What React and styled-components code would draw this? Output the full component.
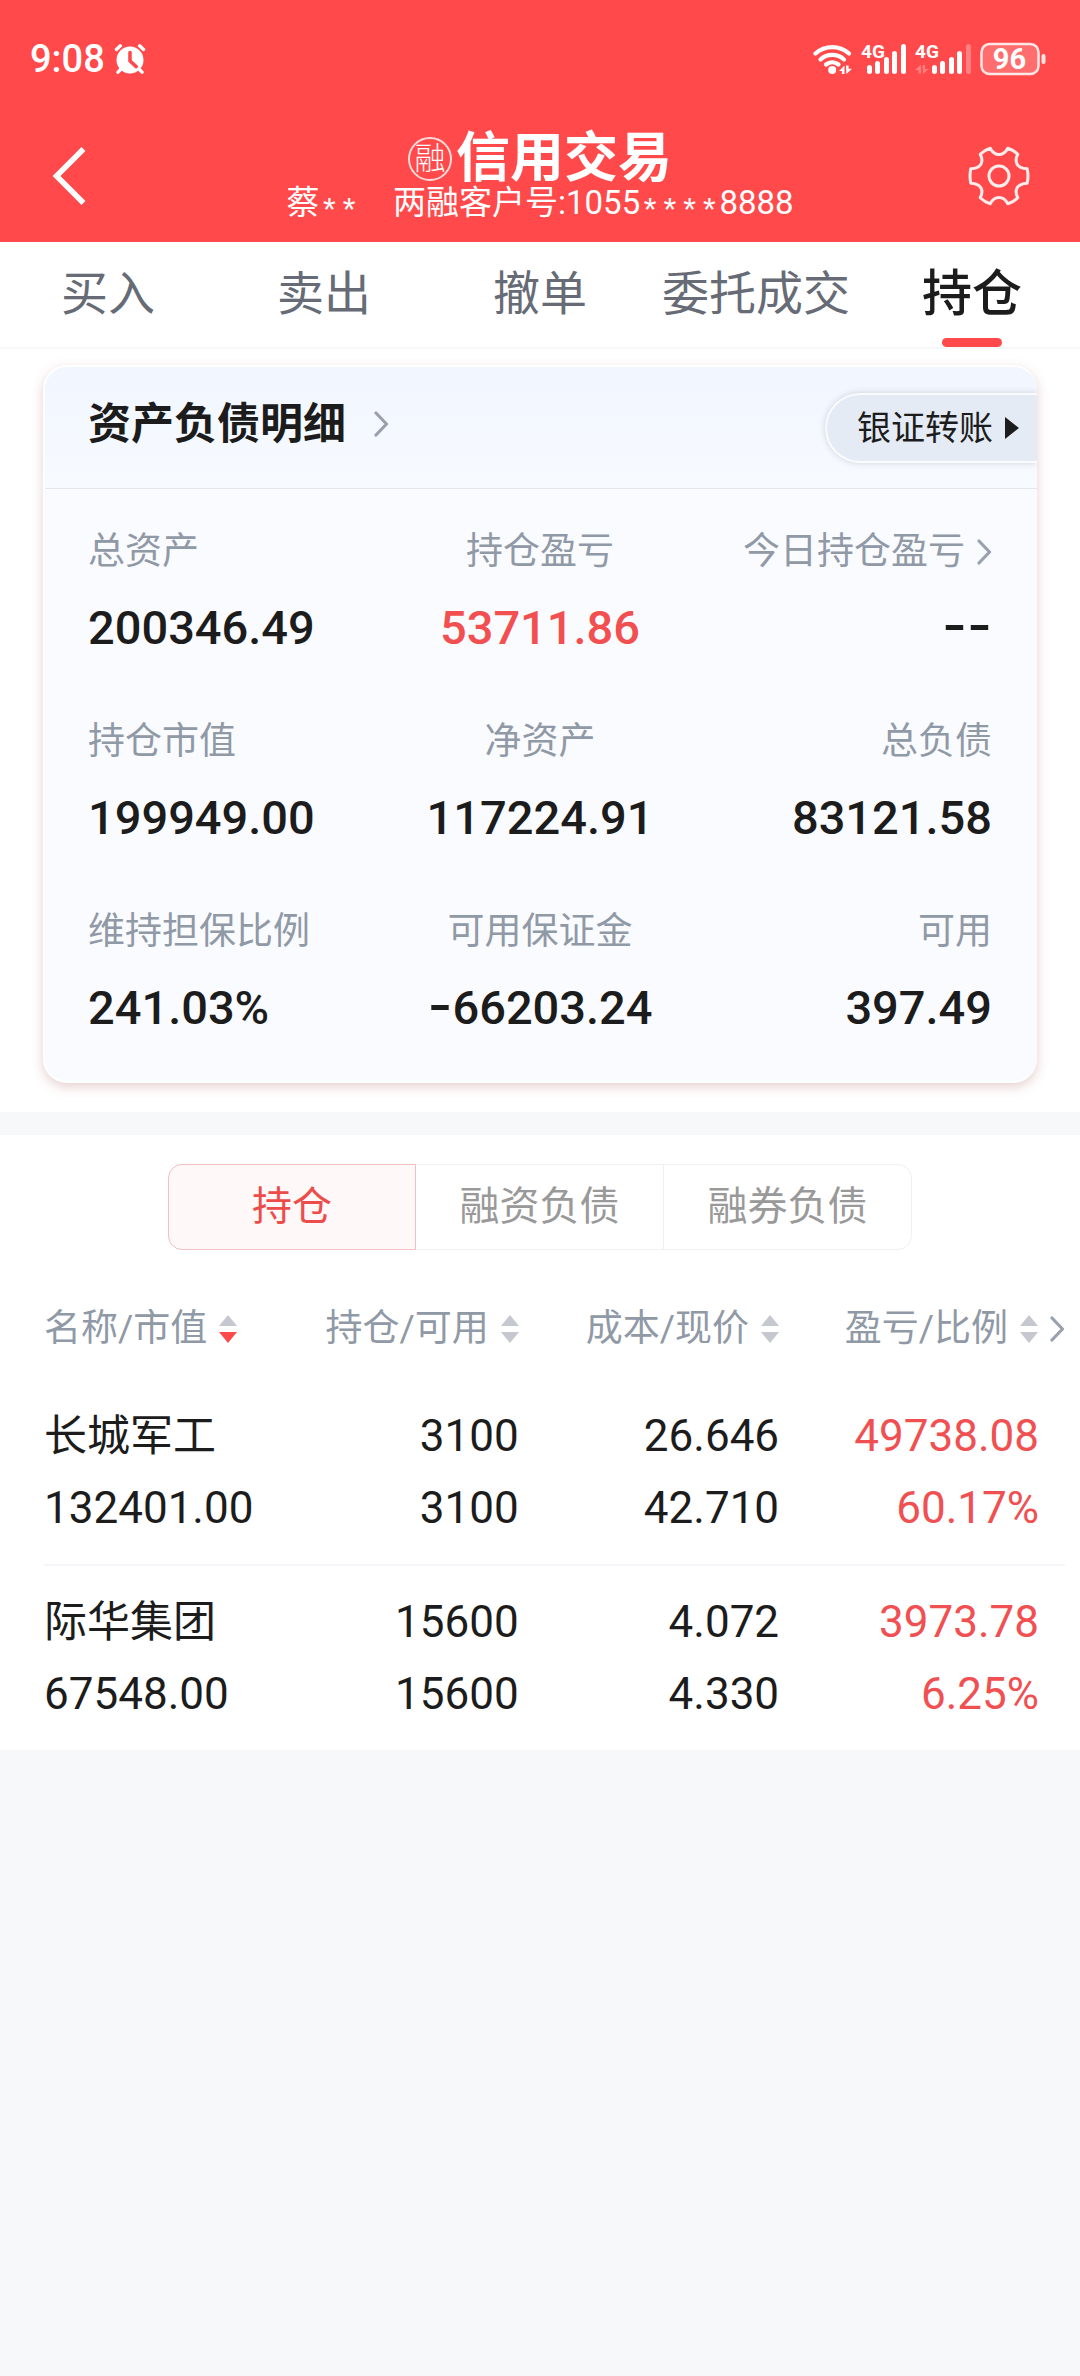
import React, { useState } from 'react';
import styled, { createGlobalStyle } from 'styled-components';

const tabs = ['买入', '卖出', '撤单', '委托成交', '持仓'];

const segments = ['持仓', '融资负债', '融券负债'];

const assets = [
    { label: '总资产', value: '200346.49' },
    { label: '持仓盈亏', value: '53711.86', up: true, align: 'center' },
    { label: '今日持仓盈亏', value: '--', link: true, align: 'flex-end' },
    { label: '持仓市值', value: '199949.00' },
    { label: '净资产', value: '117224.91', align: 'center' },
    { label: '总负债', value: '83121.58', align: 'flex-end' },
    { label: '维持担保比例', value: '241.03%' },
    { label: '可用保证金', value: '-66203.24', align: 'center' },
    { label: '可用', value: '397.49', align: 'flex-end' }
];

const columns = ['名称/市值', '持仓/可用', '成本/现价', '盈亏/比例'];

const positions = [
    {
        name: '长城军工',
        marketValue: '132401.00',
        held: '3100',
        available: '3100',
        cost: '26.646',
        price: '42.710',
        profit: '49738.08',
        ratio: '60.17%'
    },
    {
        name: '际华集团',
        marketValue: '67548.00',
        held: '15600',
        available: '15600',
        cost: '4.072',
        price: '4.330',
        profit: '3973.78',
        ratio: '6.25%'
    }
];

const AlarmIcon = () => (
    <svg width="32" height="32" viewBox="0 0 32 32" aria-hidden="true">
        <circle cx="16" cy="17" r="13.5" fill="#fff" />
        <g stroke="#fff" strokeWidth="3.4" strokeLinecap="round">
            <path d="M2.4 6.4 6.4 2.8M25.6 2.8l4 3.6M7 26l-3 3.2M25 26l3 3.2" />
        </g>
        <path d="M16 9.5V18l6.2 5.6" fill="none" stroke="#ff494a" strokeWidth="3.6" strokeLinecap="round" strokeLinejoin="round" />
    </svg>
);

const WifiIcon = () => (
    <svg width="39" height="32" viewBox="0 0 39 32" aria-hidden="true">
        <g fill="none" stroke="#fff" strokeWidth="4.2" strokeLinecap="round">
            <path d="M2.5 10.5a25 25 0 0 1 33.5 0" />
            <path d="M7.5 16.5a17.5 17.5 0 0 1 23.5 0" />
            <path d="M13 21.5a10 10 0 0 1 12.5 0" />
        </g>
        <circle cx="19.2" cy="27" r="4" fill="#fff" />
        <path d="M26 28l5.5-5.5v8.5h-2.6v-3zM33 22.5h2.6v3.2H39L33.4 31z" fill="#fff" />
    </svg>
);

const levels = [22, 18, 14, 8, 1];

const SignalIcon = ({ weak }) => {
    const start = weak ? 17 : 6;

    return (
        <svg width={ start + 39 } height="32" viewBox={ `0 0 ${ start + 39 } 32` } overflow="visible" aria-hidden="true">
            <text y="15" fill="#fff" fontSize="19" fontWeight="700">4G</text>
            { levels.map((y, i) => (
                <rect
                    key={ y }
                    x={ start + Math.round(i * 8.4) }
                    y={ y }
                    width="5"
                    height={ 31 - y }
                    rx="2.5"
                    fill="#fff"
                    opacity={ weak && i === 4 ? 0.3 : 1 }
                />
            )) }
            { weak && <path d="M0 27l6-5.5v9H3.5V27zM7.5 22h2.5v4h3.5L8 31z" fill="#fff" opacity="0.3" /> }
        </svg>
    );
};

const BatteryIcon = () => (
    <svg width="66" height="34" viewBox="0 0 66 34" aria-hidden="true">
        <rect x="1.5" y="2" width="57" height="30" rx="8" fill="#fff" fillOpacity="0.2" stroke="#fff" strokeOpacity="0.85" strokeWidth="2.5" />
        <rect x="61.5" y="12" width="4" height="10" rx="2" fill="#fff" fillOpacity="0.85" />
        <text x="29.5" y="27" fill="#fff" fontSize="29" fontWeight="700" textAnchor="middle">96</text>
    </svg>
);

const BackIcon = () => (
    <svg width="36" height="60" viewBox="0 0 36 60" aria-hidden="true">
        <path d="M33.5 3 6.5 30l27 27" fill="none" stroke="#fff" strokeWidth="5.5" />
    </svg>
);

const GearIcon = () => (
    <svg width="62" height="62" viewBox="0 0 62 62" aria-hidden="true">
        <g fill="none" stroke="#fff" strokeOpacity="0.9" strokeWidth="3" strokeLinejoin="round">
            <path d="M22.2 3.2Q25.5 9.5 31 9.5T39.8 3.2Q45.5 5 49.8 9.2Q46.8 14.5 49 19Q51.5 23.5 59.2 23.8Q60.8 31 59.2 38.2Q51.5 38.5 49 43Q46.8 47.5 49.8 52.8Q45.5 57 39.8 58.8Q36.5 52.5 31 52.5T22.2 58.8Q16.5 57 12.2 52.8Q15.2 47.5 13 43Q10.5 38.5 2.8 38.2Q1.2 31 2.8 23.8Q10.5 23.5 13 19Q15.2 14.5 12.2 9.2Q16.5 5 22.2 3.2Z" />
            <circle cx="31" cy="31" r="10" />
        </g>
    </svg>
);

const ChevronIcon = () => (
    <svg width="15" height="26" viewBox="0 0 15 26" aria-hidden="true">
        <path d="M2 2l10.5 11L2 24" fill="none" stroke="#9aa1ae" strokeWidth="3.2" strokeLinecap="round" strokeLinejoin="round" />
    </svg>
);

const PlayIcon = () => (
    <svg width="14" height="22" viewBox="0 0 14 22" aria-hidden="true">
        <path d="M0 0l14 11L0 22z" fill="#1c1c1c" />
    </svg>
);

const SortIcon = ({ active }) => (
    <svg width="18" height="28" viewBox="0 0 18 28" aria-hidden="true">
        <path d="M9 0l9 11H0z" fill="#c5c8ce" />
        <path d="M9 28l9-11H0z" fill={ active ? '#ff494a' : '#c5c8ce' } />
    </svg>
);

const App = () => {
    const [tab, setTab] = useState('持仓');
    const [segment, setSegment] = useState('持仓');

    return (
        <Root>
            <GlobalStyle />

            <Header>
                <StatusBar>
                    <StatusGroup>
                        <Clock>9:08</Clock>
                        <AlarmIcon />
                    </StatusGroup>
                    <StatusGroup>
                        <WifiIcon />
                        <SignalIcon />
                        <SignalIcon weak />
                        <BatteryIcon />
                    </StatusGroup>
                </StatusBar>

                <NavBar>
                    <IconButton aria-label="返回"><BackIcon /></IconButton>
                    <Heading>
                        <TitleRow>
                            <Badge>融</Badge>
                            <Title>信用交易</Title>
                        </TitleRow>
                        <Account>
                            <span>蔡<Mask>**</Mask></span>
                            <span>两融客户号:1055<Mask>****</Mask>8888</span>
                        </Account>
                    </Heading>
                    <IconButton aria-label="设置"><GearIcon /></IconButton>
                </NavBar>
            </Header>

            <Tabs>
                { tabs.map(name => (
                    <Tab key={ name } $active={ name === tab } onClick={ () => setTab(name) }>{ name }</Tab>
                )) }
            </Tabs>

            <Overview>
                <Card>
                    <CardHeader>
                        <CardLink href="#assets">资产负债明细<ChevronIcon /></CardLink>
                        <Transfer>银证转账<PlayIcon /></Transfer>
                    </CardHeader>
                    <AssetGrid>
                        { assets.map(({ label, value, up, link, align }) => (
                            <Asset key={ label } $align={ align }>
                                <AssetLabel>{ label }{ link && <ChevronIcon /> }</AssetLabel>
                                <AssetValue $up={ up }>
                                    { value.startsWith('-') ? <><Dash>{ value.match(/^-+/)[0] }</Dash>{ value.replace(/^-+/, '') }</> : value }
                                </AssetValue>
                            </Asset>
                        )) }
                    </AssetGrid>
                </Card>
            </Overview>

            <Holdings>
                <Segments>
                    { segments.map(name => (
                        <Segment key={ name } $active={ name === segment } onClick={ () => setSegment(name) }>{ name }</Segment>
                    )) }
                </Segments>

                <TableWrap>
                    <Table>
                        <thead>
                            <tr>
                                { columns.map((name, i) => (
                                    <HeadCell key={ name }>
                                        <SortButton>
                                            { name }
                                            <SortIcon active={ i === 0 } />
                                            { i === 3 && <ChevronIcon /> }
                                        </SortButton>
                                    </HeadCell>
                                )) }
                            </tr>
                        </thead>
                        <tbody>
                            { positions.map(item => (
                                <Row key={ item.name }>
                                    <Cell><Name>{ item.name }</Name><Line>{ item.marketValue }</Line></Cell>
                                    <Cell><Line>{ item.held }</Line><Line>{ item.available }</Line></Cell>
                                    <Cell><Line>{ item.cost }</Line><Line>{ item.price }</Line></Cell>
                                    <Cell $up><Line>{ item.profit }</Line><Line>{ item.ratio }</Line></Cell>
                                </Row>
                            )) }
                        </tbody>
                    </Table>
                </TableWrap>
            </Holdings>
        </Root>
    );
};

export default App;

const GlobalStyle = createGlobalStyle`
    * {
        box-sizing: border-box;
    }

    body {
        margin: 0;
        background-color: #f6f8fa;
    }

    body, button {
        font-family: Roboto, "Noto Sans CJK SC", sans-serif;
    }

    button {
        margin: 0;
        padding: 0;
        border: 0;
        background: none;
        color: inherit;
        cursor: pointer;
    }

    svg {
        display: block;
        flex: none;
    }
`;

const Root = styled.div`
    min-height: 100vh;
    color: #1c1c1c;
    background-color: #f6f8fa;
`;

const Header = styled.header`
    color: #fff;
    background-color: #ff494a;
`;

const StatusBar = styled.div`
    display: flex;
    justify-content: space-between;
    align-items: center;
    height: 118px;
    padding: 0 34px 0 30px;
`;

const StatusGroup = styled.div`
    display: flex;
    align-items: center;
    gap: 9px;
`;

const Clock = styled.span`
    font-size: 38px;
    font-weight: 500;
    line-height: 40px;
`;

const NavBar = styled.div`
    display: flex;
    justify-content: space-between;
    align-items: center;
    padding: 14px 50px 22px;
`;

const IconButton = styled.button`
    display: flex;
    width: 62px;
    justify-content: flex-start;
`;

const Heading = styled.div`
    display: flex;
    flex-direction: column;
    align-items: center;
`;

const TitleRow = styled.div`
    display: flex;
    align-items: center;
    gap: 4px;
`;

const Badge = styled.span`
    width: 44px;
    height: 44px;
    border: 2px solid rgba(255, 255, 255, 0.8);
    border-radius: 50%;
    font-size: 31px;
    font-weight: 300;
    line-height: 40px;
    text-align: center;
`;

const Title = styled.h1`
    margin: 0;
    font-size: 54px;
    font-weight: 700;
    line-height: 54px;
`;

const Account = styled.div`
    display: flex;
    gap: 34px;
    font-size: 33px;
    line-height: 34px;
`;

const Mask = styled.span`
    font-family: "Liberation Mono", monospace;
    line-height: 0;
    vertical-align: sub;
`;

const Tabs = styled.nav`
    display: grid;
    grid-template-columns: repeat(5, 1fr);
    border-bottom: 2px solid #f6f7f9;
    background-color: #fff;
`;

const Tab = styled.button`
    display: flex;
    flex-direction: column;
    align-items: center;
    height: 105px;
    padding-top: 20px;
    color: ${ ({ $active }) => $active ? '#1c1c1c' : '#666b76' };
    font-size: ${ ({ $active }) => $active ? '50px' : '47px' };
    font-weight: ${ ({ $active }) => $active ? 500 : 400 };
    line-height: 64px;

    &::after {
        content: "";
        width: 60px;
        height: 9px;
        margin-top: 12px;
        border-radius: 5px;
        background-color: ${ ({ $active }) => $active ? '#ff494a' : 'transparent' };
    }
`;

const Overview = styled.section`
    padding: 16px 43px 29px;
    background-color: #fff;
`;

const Card = styled.div`
    overflow: hidden;
    border: 2px solid #fff;
    border-right-width: 0;
    border-radius: 24px;
    background-color: #fafbff;
    box-shadow: 0 4px 12px rgba(170, 90, 90, 0.28);
`;

const CardHeader = styled.div`
    display: flex;
    justify-content: space-between;
    align-items: center;
    height: 122px;
    padding-left: 43px;
    border-bottom: 1px solid #e1e7ed;
    background-image: linear-gradient(#f1f6ff, #f7faff);
`;

const CardLink = styled.a`
    display: flex;
    align-items: center;
    gap: 28px;
    padding-bottom: 8px;
    color: inherit;
    font-size: 43px;
    font-weight: 700;
    line-height: 56px;
    text-decoration: none;
`;

const Transfer = styled.button`
    display: flex;
    align-items: center;
    gap: 12px;
    height: 70px;
    padding: 0 18px 0 30px;
    border: 2px solid rgba(255, 255, 255, 0.8);
    border-right: 0;
    border-radius: 35px 0 0 35px;
    background-color: #e4ebf4;
    box-shadow: 0 0 6px rgba(60, 60, 60, 0.2);
    font-size: 34px;
    line-height: 48px;
`;

const AssetGrid = styled.div`
    display: grid;
    grid-template-columns: repeat(3, 1fr);
    row-gap: 66px;
    padding: 43px 45px 45px 43px;
`;

const Asset = styled.div`
    display: flex;
    flex-direction: column;
    align-items: ${ ({ $align }) => $align || 'flex-start' };
    gap: 28px;
`;

const AssetLabel = styled.div`
    display: flex;
    align-items: center;
    gap: 12px;
    color: #9099a6;
    font-size: 37px;
    line-height: 40px;
`;

const AssetValue = styled.div`
    color: ${ ({ $up }) => $up ? '#f24f50' : '#1c1c1c' };
    font-size: 47px;
    font-weight: 500;
    line-height: 56px;
`;

const Dash = styled.span`
    font-family: Inter, sans-serif;
    font-size: 54px;
    line-height: 0;
`;

const Holdings = styled.section`
    margin-top: 23px;
    background-color: #fff;
`;

const Segments = styled.div`
    display: grid;
    grid-template-columns: repeat(3, 1fr);
    padding: 29px 168px 28px;
`;

const Segment = styled.button`
    height: 86px;
    margin-left: -1px;
    border: 1px solid ${ ({ $active }) => $active ? '#f2bfc2' : '#eef0f4' };
    background-color: ${ ({ $active }) => $active ? '#fff8f8' : '#fff' };
    color: ${ ({ $active }) => $active ? '#ec4d4a' : '#999' };
    font-size: 40px;
    line-height: 56px;
    z-index: ${ ({ $active }) => $active ? 1 : 0 };

    &:first-child {
        margin-left: 0;
        border-radius: 14px 0 0 14px;
    }

    &:last-child {
        border-radius: 0 14px 14px 0;
    }
`;

const TableWrap = styled.div`
    padding: 0 15px 0 44px;
`;

const Table = styled.table`
    width: 100%;
    border-collapse: collapse;
    table-layout: fixed;
`;

const HeadCell = styled.th`
    width: 25.5%;
    height: 102px;
    padding: 0;
    color: #9099a6;
    font-size: 37px;
    font-weight: 400;

    &:first-child {
        width: 21%;
    }

    &:last-child {
        width: 28%;
    }
`;

const SortButton = styled.button`
    display: flex;
    align-items: center;
    gap: 12px;
    margin-left: auto;
    font-size: 37px;
    line-height: 40px;
    white-space: nowrap;

    ${ HeadCell }:first-child & {
        margin-left: 0;
    }
`;

const Row = styled.tr`
    &:not(:last-child) {
        border-bottom: 2px solid #f5f6f9;
    }
`;

const Cell = styled.td`
    padding: 20px 0;
    color: ${ ({ $up }) => $up ? '#f05052' : '#1c1c1c' };
    font-size: 44px;
    line-height: 72px;
    text-align: right;

    &:first-child {
        text-align: left;
    }

    &:last-child {
        padding-right: 26px;
    }
`;

const Line = styled.div`
    height: 72px;
    white-space: nowrap;
`;

const Name = styled(Line)`
    font-size: 43px;
`;
